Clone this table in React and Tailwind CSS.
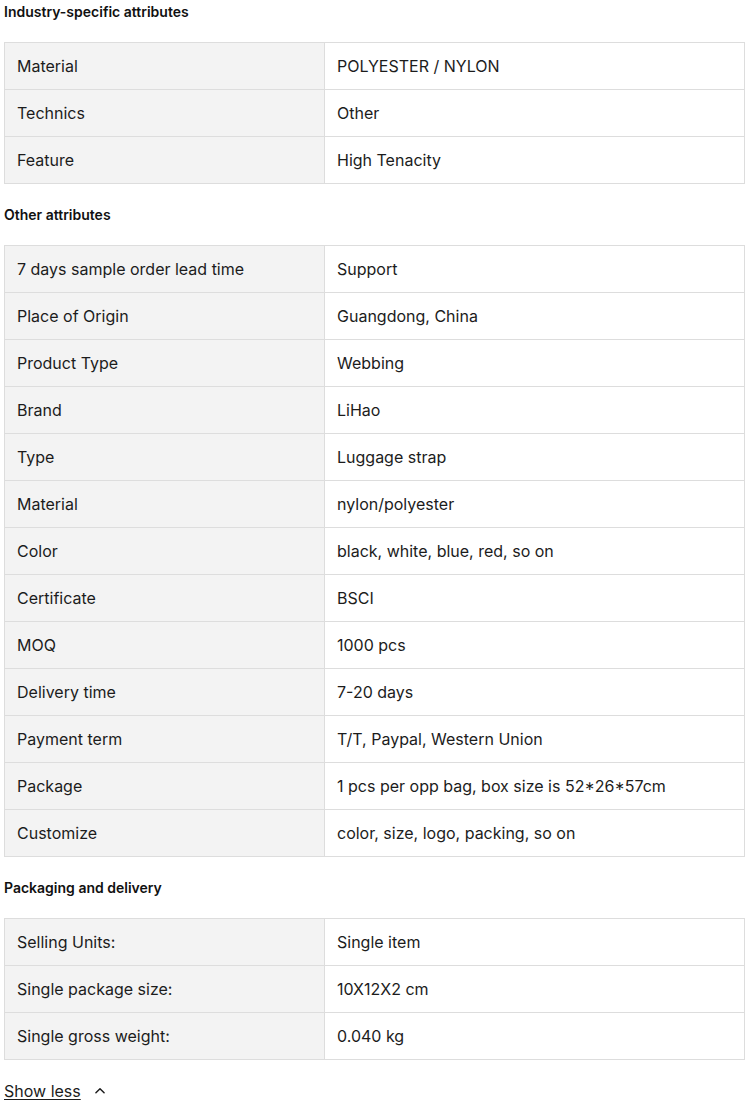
const sections = [
  {
    title: 'Industry-specific attributes',
    rows: [
      ['Material', 'POLYESTER / NYLON'],
      ['Technics', 'Other'],
      ['Feature', 'High Tenacity'],
    ],
  },
  {
    title: 'Other attributes',
    rows: [
      ['7 days sample order lead time', 'Support'],
      ['Place of Origin', 'Guangdong, China'],
      ['Product Type', 'Webbing'],
      ['Brand', 'LiHao'],
      ['Type', 'Luggage strap'],
      ['Material', 'nylon/polyester'],
      ['Color', 'black, white, blue, red, so on'],
      ['Certificate', 'BSCI'],
      ['MOQ', '1000 pcs'],
      ['Delivery time', '7-20 days'],
      ['Payment term', 'T/T, Paypal, Western Union'],
      ['Package', '1 pcs per opp bag, box size is 52*26*57cm'],
      ['Customize', 'color, size, logo, packing, so on'],
    ],
  },
  {
    title: 'Packaging and delivery',
    rows: [
      ['Selling Units:', 'Single item'],
      ['Single package size:', '10X12X2 cm'],
      ['Single gross weight:', '0.040 kg'],
    ],
  },
]

function AttrTable({ rows }) {
  return (
    <table className="w-[741px] border-collapse border border-[#dddddd] text-base text-[#1c1c1c]">
      <tbody>
        {rows.map(([label, value], i) => (
          <tr key={i}>
            <td className="w-[320px] h-[47px] border border-[#dddddd] bg-[#f3f3f3] px-3 py-0 leading-6 align-middle">
              {label}
            </td>
            <td className="h-[47px] border border-[#dddddd] bg-white px-3 py-0 leading-6 align-middle">
              {value}
            </td>
          </tr>
        ))}
      </tbody>
    </table>
  )
}

function App() {
  return (
    <div className="bg-white px-1 pt-[2px] pb-4 text-[#1c1c1c]" style={{ fontFamily: 'Inter, "Liberation Sans", sans-serif' }}>
      {sections.map((s, i) => (
        <section key={s.title} className={i > 0 ? 'mt-[21px]' : ''}>
          <h3 className="h-5 mb-5 text-sm leading-5 font-semibold text-[#111111]">{s.title}</h3>
          <AttrTable rows={s.rows} />
        </section>
      ))}

      <button className="mt-[19px] flex items-center gap-3 text-base leading-6 text-[#1c1c1c]">
        <span className="underline underline-offset-2">Show less</span>
        <svg width="14" height="14" viewBox="0 0 24 24" fill="none" stroke="currentColor" strokeWidth="2.5" strokeLinecap="round" strokeLinejoin="round">
          <path d="M5 15l7-7 7 7" />
        </svg>
      </button>
    </div>
  )
}

export default App
